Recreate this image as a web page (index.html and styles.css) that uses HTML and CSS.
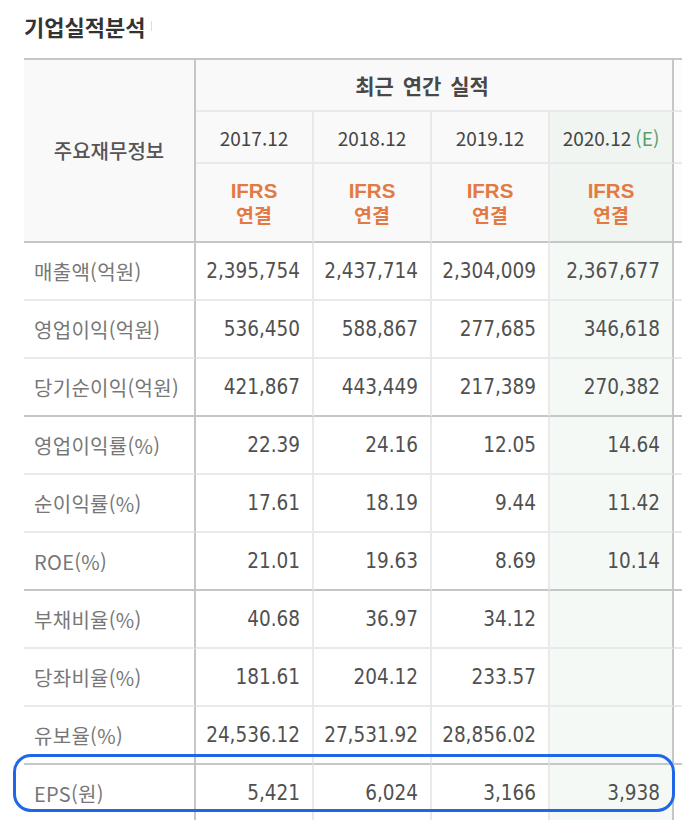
FILE: index.html
```html
<!DOCTYPE html>
<html lang="ko">
<head>
<meta charset="utf-8">
<title>기업실적분석</title>
<link rel="stylesheet" href="styles.css">
</head>
<body>
<div class="page">
  <h2 class="title">기업실적분석</h2>
  <div class="wrap">
    <div class="fin">
      <div class="c hd label-head">주요재무정보</div>
      <div class="c hd group edge">최근 연간 실적</div>
      <div class="c hd next"></div>

      <div class="c hd year">2017.12</div>
      <div class="c hd year">2018.12</div>
      <div class="c hd year">2019.12</div>
      <div class="c hd year est edge">2020.12 <span class="e">(E)</span></div>
      <div class="c hd next"></div>

      <div class="c hd ifrs end"><span class="en">IFRS</span><span>연결</span></div>
      <div class="c hd ifrs end"><span class="en">IFRS</span><span>연결</span></div>
      <div class="c hd ifrs end"><span class="en">IFRS</span><span>연결</span></div>
      <div class="c hd ifrs est edge end"><span class="en">IFRS</span><span>연결</span></div>
      <div class="c hd next end"></div>

      <div class="c lbl">매출액(억원)</div>
      <div class="c num">2,395,754</div>
      <div class="c num">2,437,714</div>
      <div class="c num">2,304,009</div>
      <div class="c num est edge">2,367,677</div>
      <div class="c blank"></div>

      <div class="c lbl">영업이익(억원)</div>
      <div class="c num">536,450</div>
      <div class="c num">588,867</div>
      <div class="c num">277,685</div>
      <div class="c num est edge">346,618</div>
      <div class="c blank"></div>

      <div class="c lbl end">당기순이익(억원)</div>
      <div class="c num end">421,867</div>
      <div class="c num end">443,449</div>
      <div class="c num end">217,389</div>
      <div class="c num est edge end">270,382</div>
      <div class="c blank end"></div>

      <div class="c lbl">영업이익률(%)</div>
      <div class="c num">22.39</div>
      <div class="c num">24.16</div>
      <div class="c num">12.05</div>
      <div class="c num est edge">14.64</div>
      <div class="c blank"></div>

      <div class="c lbl">순이익률(%)</div>
      <div class="c num">17.61</div>
      <div class="c num">18.19</div>
      <div class="c num">9.44</div>
      <div class="c num est edge">11.42</div>
      <div class="c blank"></div>

      <div class="c lbl end">ROE(%)</div>
      <div class="c num end">21.01</div>
      <div class="c num end">19.63</div>
      <div class="c num end">8.69</div>
      <div class="c num est edge end">10.14</div>
      <div class="c blank end"></div>

      <div class="c lbl">부채비율(%)</div>
      <div class="c num">40.68</div>
      <div class="c num">36.97</div>
      <div class="c num">34.12</div>
      <div class="c num est edge"></div>
      <div class="c blank"></div>

      <div class="c lbl">당좌비율(%)</div>
      <div class="c num">181.61</div>
      <div class="c num">204.12</div>
      <div class="c num">233.57</div>
      <div class="c num est edge"></div>
      <div class="c blank"></div>

      <div class="c lbl end">유보율(%)</div>
      <div class="c num end">24,536.12</div>
      <div class="c num end">27,531.92</div>
      <div class="c num end">28,856.02</div>
      <div class="c num est edge end"></div>
      <div class="c blank end"></div>

      <div class="c lbl">EPS(원)</div>
      <div class="c num">5,421</div>
      <div class="c num">6,024</div>
      <div class="c num">3,166</div>
      <div class="c num est edge">3,938</div>
      <div class="c blank"></div>
    </div>
  </div>
  <div class="mark"></div>
</div>
</body>
</html>
```

FILE: styles.css
```css
html, body {
  margin: 0;
  padding: 0;
  background: #ffffff;
}

.page {
  position: relative;
  width: 682px;
  height: 820px;
  overflow: hidden;
  font-family: "Noto Sans CJK KR", "Noto Sans", sans-serif;
}

.title {
  margin: 12px 0 0 24px;
  height: 28px;
  font-size: 22px;
  line-height: 28px;
  font-weight: 700;
  color: #333333;
  display: flex;
  align-items: center;
}

.title::after {
  content: "";
  display: inline-block;
  width: 1px;
  height: 10px;
  margin-left: 6px;
  background: #dddddd;
}

.wrap {
  margin: 18px 0 0 24px;
  width: 658px;
  overflow: hidden;
}

.fin {
  display: grid;
  grid-template-columns: 172px 118px 118px 118px 124px 120px;
  grid-template-rows: 52px 52px 79px repeat(10, 58px);
  width: 670px;
  border-top: 2px solid #c6c6c6;
}

.c {
  box-sizing: border-box;
  display: flex;
  align-items: center;
  border-bottom: 2px solid #e9e9e9;
  border-right: 2px solid #e9e9e9;
  min-width: 0;
}

.c.end {
  border-bottom-color: #c6c6c6;
}

.c.edge {
  border-right-color: #c6c6c6;
}

.hd {
  background: #f9f9f9;
  justify-content: center;
  color: #444444;
}

.label-head {
  grid-row: 1 / 4;
  grid-column: 1;
  border-right-color: #c6c6c6;
  border-bottom-color: #c6c6c6;
  font-size: 20px;
  font-weight: 500;
  color: #555555;
}

.group {
  grid-column: 2 / 6;
  font-size: 21px;
  font-weight: 700;
  word-spacing: 3px;
  color: #484848;
  padding-right: 24px;
}

.hd.next {
  background: #fcfcfc;
  border-right: none;
}

.year {
  font-size: 19px;
  color: #444444;
}

.year .e {
  color: #5b9d6b;
  margin-left: 4px;
}

.ifrs {
  flex-direction: column;
  font-size: 19.5px;
  line-height: 24px;
  font-weight: 700;
  color: #e37943;
}

.ifrs .en {
  font-family: "Liberation Sans", "Noto Sans", sans-serif;
  font-size: 20.5px;
}

.hd.est {
  background: #f0f5f1;
}

.lbl {
  border-right-color: #c6c6c6;
  padding-left: 10px;
  font-size: 20px;
  letter-spacing: 0.3px;
  color: #777777;
  white-space: nowrap;
}

.num {
  justify-content: flex-end;
  padding-right: 12px;
  font-family: "DejaVu Sans Condensed", "DejaVu Sans", sans-serif;
  font-stretch: condensed;
  font-size: 20.5px;
  color: #505050;
  white-space: nowrap;
}

.num.est {
  background: #f5f9f6;
}

.blank {
  border-right: none;
}

.mark {
  position: absolute;
  left: 13px;
  top: 754px;
  width: 662px;
  height: 58px;
  box-sizing: border-box;
  border: 3px solid #1f66e8;
  border-radius: 18px;
}
```
